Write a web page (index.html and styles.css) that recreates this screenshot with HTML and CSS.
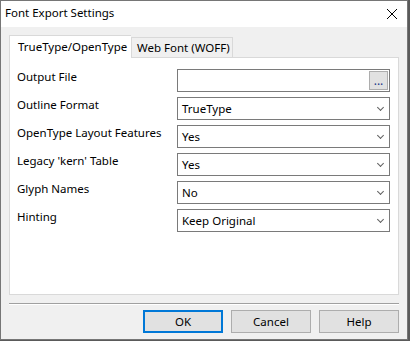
FILE: index.html
```html
<!DOCTYPE html>
<html lang="en">
<head>
    <meta charset="UTF-8">
    <title>Font Export Settings</title>
    <link rel="stylesheet" href="styles.css">
</head>
<body>
    <div class="window">
        <!-- 标题栏 -->
        <div class="titlebar">
            <span class="title">Font Export Settings</span>
            <svg class="close" width="12" height="12" viewBox="0 0 12 12">
                <path d="M1 1 L11 11 M11 1 L1 11" stroke="#000" stroke-width="1" fill="none"/>
            </svg>
        </div>

        <div class="content">
            <!-- 标签页 -->
            <div class="tabs">
                <div class="tab tab-active">TrueType/OpenType</div>
                <div class="tab tab-woff">Web Font (WOFF)</div>
            </div>

            <div class="panel">
                <div class="form-grid">
                    <div class="label">Output File</div>
                    <div class="field field-file">
                        <span class="field-value"></span>
                        <span class="browse">...</span>
                    </div>

                    <div class="label">Outline Format</div>
                    <div class="field"><span class="field-value">TrueType</span><span class="chevron"></span></div>

                    <div class="label">OpenType Layout Features</div>
                    <div class="field"><span class="field-value">Yes</span><span class="chevron"></span></div>

                    <div class="label">Legacy 'kern' Table</div>
                    <div class="field"><span class="field-value">Yes</span><span class="chevron"></span></div>

                    <div class="label">Glyph Names</div>
                    <div class="field"><span class="field-value">No</span><span class="chevron"></span></div>

                    <div class="label">Hinting</div>
                    <div class="field"><span class="field-value">Keep Original</span><span class="chevron"></span></div>
                </div>
            </div>

            <div class="separator"></div>

            <!-- 按钮 -->
            <div class="buttons">
                <button class="btn btn-default">OK</button>
                <button class="btn">Cancel</button>
                <button class="btn">Help</button>
            </div>
        </div>
    </div>
</body>
</html>
```

FILE: styles.css
```css
/* 对话框整体 */
body {
    margin: 0;
    background-color: #5a5a5a;
    font-family: "Noto Sans", "Open Sans", Arial, sans-serif;
    font-size: 11px;
    color: #000000;
}

.window {
    width: 406px;
    height: 338px;
    border: 1px solid #767676;
    background-color: #f0f0f0;
    display: flex;
    flex-direction: column;
}

/* 标题栏 */
.titlebar {
    height: 26px;
    background-color: #ffffff;
    display: flex;
    align-items: center;
    justify-content: space-between;
    padding: 0 9px 0 4px;
    flex-shrink: 0;
}

.title {
    font-size: 11.5px;
    line-height: 16px;
    margin-top: -2px;
}

.close {
    display: block;
    margin-top: -1px;
}

/* 内容区 */
.content {
    padding: 8px 8px 0 8px;
    display: flex;
    flex-direction: column;
}

.tabs {
    display: flex;
    align-items: flex-end;
    height: 22px;
}

.tab {
    height: 20px;
    line-height: 19px;
    border: 1px solid #d9d9d9;
    border-bottom: none;
    background-color: #f0f0f0;
    box-sizing: border-box;
}

.tab-active {
    width: 122px;
    height: 23px;
    line-height: 21px;
    padding-left: 8px;
    background-color: #ffffff;
    margin-bottom: -1px;
    position: relative;
    z-index: 1;
    border-right: none;
    font-size: 11.5px;
}

.tab-woff {
    width: 102px;
    padding-left: 5px;
    font-size: 11.5px;
}

.panel {
    height: 238px;
    box-sizing: border-box;
    border: 1px solid #d9d9d9;
    background-color: #ffffff;
    padding: 11px 8px 0 7px;
}

.form-grid {
    display: grid;
    grid-template-columns: 160px 1fr;
    grid-auto-rows: 23px;
    row-gap: 5px;
}

.label {
    line-height: 16px;
    font-size: 11.5px;
}

/* 下拉框 */
.field {
    border: 1px solid #7a7a7a;
    background-color: #ffffff;
    display: flex;
    align-items: center;
    justify-content: space-between;
    padding: 0 5px 0 4px;
    box-sizing: border-box;
    font-size: 11.5px;
}

.field-value {
    line-height: 16px;
}

.chevron {
    width: 4px;
    height: 4px;
    border-right: 1px solid #606060;
    border-bottom: 1px solid #606060;
    transform: rotate(45deg);
    margin-top: -3px;
    margin-right: 1px;
}

.field-file {
    padding-right: 1px;
}

.browse {
    width: 19px;
    height: 19px;
    box-sizing: border-box;
    border: 1px solid #adadad;
    background-color: #e1e1e1;
    color: #1b3a8a;
    font-size: 12px;
    line-height: 17px;
    text-align: center;
}

/* 分隔线 */
.separator {
    height: 1px;
    background-color: #a0a0a0;
    border-bottom: 1px solid #ffffff;
    margin-top: 8px;
}

.buttons {
    display: flex;
    justify-content: flex-end;
    gap: 8px;
    margin-top: 5px;
}

.btn {
    width: 80px;
    height: 23px;
    border: 1px solid #adadad;
    background-color: #e1e1e1;
    font-family: inherit;
    font-size: 11.5px;
    color: #000000;
    padding: 0;
}

.btn-default {
    border: 2px solid #0078d7;
}
```
